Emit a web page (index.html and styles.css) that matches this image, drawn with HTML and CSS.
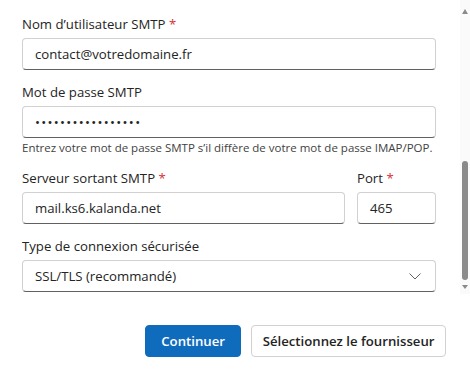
FILE: index.html
```html
<!DOCTYPE html>
<html lang="fr">
<head>
<meta charset="UTF-8" />
<meta name="viewport" content="width=device-width, initial-scale=1" />
<title>Configuration SMTP</title>
<link rel="stylesheet" href="styles.css">
</head>
<body>
    <div class="dialog">
        <div class="form">
            <div class="field">
                <label class="label">Nom d’utilisateur SMTP <span class="req">*</span></label>
                <input class="input" type="text" value="contact@votredomaine.fr">
            </div>
            <div class="field">
                <label class="label">Mot de passe SMTP</label>
                <input class="input input-password" type="password" value="xxxxxxxxxxxxxxxxx">
                <div class="hint">Entrez votre mot de passe SMTP s’il diffère de votre mot de passe IMAP/POP.</div>
            </div>
            <div class="row">
                <div class="field">
                    <label class="label">Serveur sortant SMTP <span class="req">*</span></label>
                    <input class="input" type="text" value="mail.ks6.kalanda.net">
                </div>
                <div class="field">
                    <label class="label">Port <span class="req">*</span></label>
                    <input class="input" type="text" value="465">
                </div>
            </div>
            <div class="field">
                <label class="label">Type de connexion sécurisée</label>
                <div class="select">
                    <span>SSL/TLS (recommandé)</span>
                    <svg class="chevron" width="12" height="7" viewBox="0 0 12 7">
                        <path d="M0.5 0.5 L6 6 L11.5 0.5" fill="none" stroke="#616161" stroke-width="1"/>
                    </svg>
                </div>
            </div>
        </div>

        <div class="footer">
            <button class="btn btn-primary">Continuer</button>
            <button class="btn btn-secondary">Sélectionnez le fournisseur</button>
        </div>

        <!-- scrollbar dessinee a la main -->
        <div class="scrollbar">
            <span class="arrow-up"></span>
            <span class="thumb"></span>
            <span class="arrow-down"></span>
        </div>
    </div>
</body>
</html>
```

FILE: styles.css
```css
:root {
    --text-color: #242424;
    --border-color: #d1d1d1;
    --border-bottom: #616161;
    --primary-color: #0f6cbd;
    --required: #d13438;
}

body, html {
    margin: 0;
    padding: 0;
    background: #fff;
    font-family: "Segoe UI", "Open Sans", Arial, sans-serif;
    color: var(--text-color);
}

.dialog {
    position: relative;
    width: 470px;
    height: 380px;
    overflow: hidden;
}

.form {
    display: flex;
    flex-direction: column;
    gap: 12px;
    padding: 14px 34px 0 22px;
}

.field {
    display: flex;
    flex-direction: column;
    gap: 4px;
}

.label {
    font-size: 13.2px;
    line-height: 20px;
}

.req {
    color: var(--required);
}

.input, .select {
    box-sizing: border-box;
    height: 32px;
    width: 100%;
    margin: 0;
    padding: 0 12px;
    border: 1px solid var(--border-color);
    border-bottom-color: var(--border-bottom);
    border-radius: 4px;
    font-family: inherit;
    font-size: 13.2px;
    color: var(--text-color);
    background: #fff;
    outline: none;
}

.input-password {
    letter-spacing: 1.3px;
}

.hint {
    margin-top: -2px;
    font-size: 11.5px;
    line-height: 16px;
    color: #424242;
}

.row {
    display: grid;
    grid-template-columns: 1fr 79px;
    gap: 12px;
}

.select {
    display: flex;
    align-items: center;
    justify-content: space-between;
    padding-right: 14px;
}

.footer {
    display: flex;
    justify-content: flex-end;
    gap: 10px;
    padding: 0 24px 0 0;
    margin-top: 33px;
}

.btn {
    box-sizing: border-box;
    min-width: 96px;
    height: 32px;
    padding: 0 12px;
    border: 1px solid var(--border-color);
    border-radius: 4px;
    background: #fff;
    color: var(--text-color);
    font-family: inherit;
    font-size: 13.2px;
    font-weight: 600;
}

.btn-primary {
    background: var(--primary-color);
    border-color: var(--primary-color);
    color: #fff;
}

.btn-secondary {
    padding: 0 10.5px;
}

.scrollbar {
    position: absolute;
    top: 0;
    right: 0;
    width: 10px;
    height: 294px;
    background: #fafafa;
}

.arrow-up, .arrow-down {
    position: absolute;
    left: 2px;
    width: 0;
    height: 0;
    border-left: 3px solid transparent;
    border-right: 3px solid transparent;
}

.arrow-up {
    top: 9px;
    border-bottom: 5px solid #8a8a8a;
}

.arrow-down {
    top: 285px;
    border-top: 4px solid #8a8a8a;
}

.thumb {
    position: absolute;
    left: 2px;
    top: 161px;
    width: 6px;
    height: 119px;
    border-radius: 3px;
    background: #8a8a8a;
}
```
